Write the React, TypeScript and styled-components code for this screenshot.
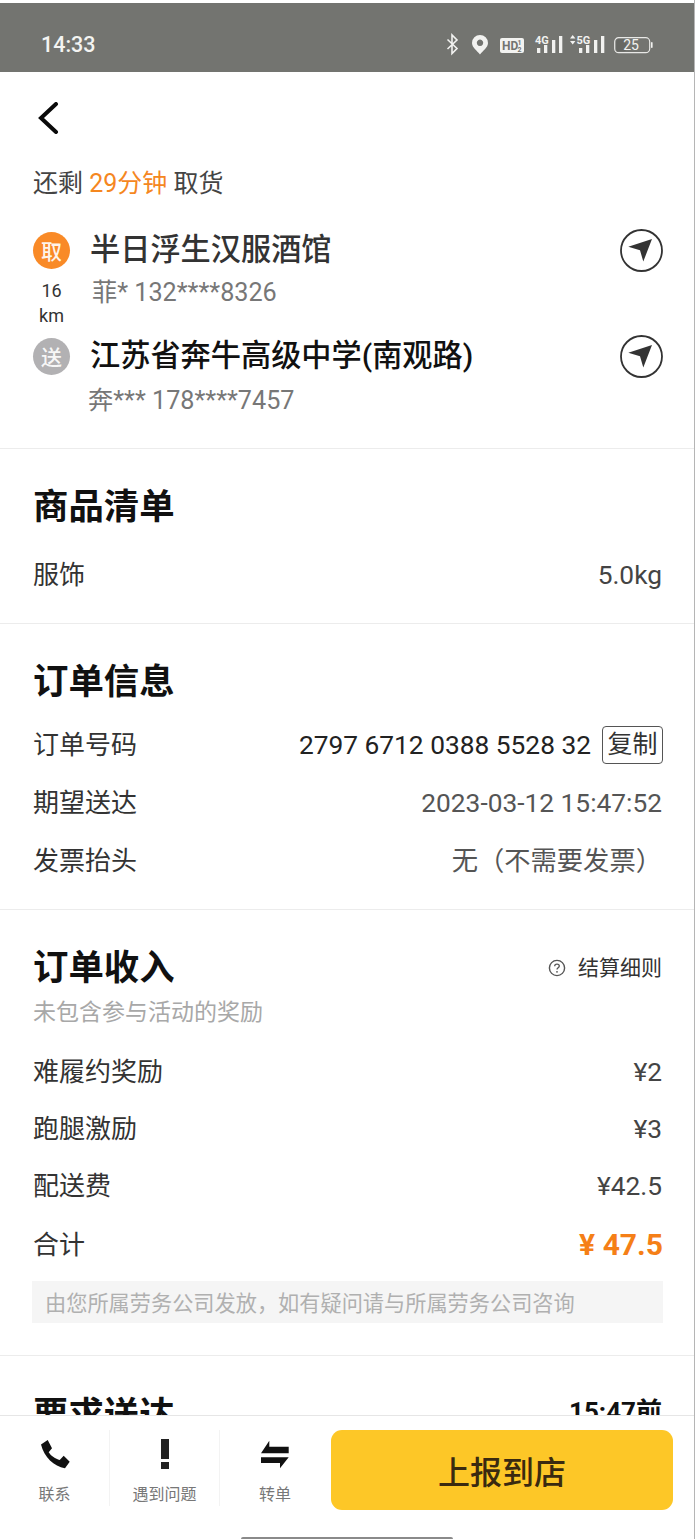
import React from "react";
import styled, { createGlobalStyle } from "styled-components";

const Global = createGlobalStyle`
  html, body { margin: 0; padding: 0; background: #fff; }
  * { box-sizing: border-box; }
  body { font-family: Roboto, "Noto Sans CJK SC", sans-serif; }
`;

const Frame = styled.div`
  width: 695px;
  height: 1539px;
  padding-top: 3px;
  display: flex;
  flex-direction: column;
  overflow: hidden;
  background: #fff;
  border-right: 1px solid #b5b5b5;
  color: #222;
`;

const StatusBar = styled.div`
  height: 69px;
  flex: none;
  background: #737470;
  color: #f4f4f2;
  display: flex;
  align-items: center;
  justify-content: space-between;
  padding: 14px 41px 0 41px;
`;
const Clock = styled.span`
  font-size: 21.5px;
  font-weight: 500;
`;
const StatusIcons = styled.div`
  display: flex;
  align-items: center;
  height: 26px;
`;

const Scroll = styled.div`
  flex: 1;
  min-height: 0;
  overflow: hidden;
`;

const Head = styled.div`
  padding: 30px 32px 0 33px;
  border-bottom: 1px solid #ececec;
  height: 377px;
`;
const Back = styled.div`
  height: 34px;
  padding-left: 4px;
  display: flex;
`;
const Remain = styled.div`
  margin-top: 33px;
  font-size: 25px;
  line-height: 30px;
  color: #444;
`;
const Accent = styled.span`
  color: #f5871f;
`;
const Route = styled.div`
  margin-top: 29px;
  display: grid;
  grid-template-columns: 57px 1fr 43px;
  grid-template-rows: 44px 62px 44px 46px;
  align-items: center;
  margin-right: -1px;
`;
const Marker = styled.span<{ $bg: string }>`
  width: 37px;
  height: 37px;
  border-radius: 50%;
  background: ${(p) => p.$bg};
  color: rgba(255, 255, 255, 0.92);
  font-size: 21px;
  font-weight: 500;
  display: flex;
  align-items: center;
  justify-content: center;
`;
const Place = styled.div<{ $c: string }>`
  font-size: 30.2px;
  font-weight: 500;
  color: ${(p) => p.$c};
  line-height: 40px;
  white-space: nowrap;
`;
const Dist = styled.div`
  width: 37px;
  text-align: center;
  font-size: 18px;
  line-height: 25px;
  color: #333;
  align-self: center;
`;
const Contact = styled.div<{ $shift: number; $up: number }>`
  font-size: 25.2px;
  line-height: 32px;
  color: #777;
  margin-left: ${(p) => p.$shift}px;
  margin-bottom: ${(p) => p.$up}px;
`;
const Span = styled.div`
  grid-column: 2 / 4;
`;

const Section = styled.section<{ $h: number }>`
  height: ${(p) => p.$h}px;
  flex: none;
  border-bottom: 1px solid #ececec;
  padding: 0 32px 0 33px;
`;
const TitleRow = styled.div<{ $top: number }>`
  padding-top: ${(p) => p.$top}px;
  display: flex;
  justify-content: space-between;
  align-items: center;
`;
const Title = styled.h2`
  margin: 0;
  font-size: 35.4px;
  font-weight: 700;
  line-height: 44px;
  color: #111;
`;
const Row = styled.div<{ $h: number; $gap?: number }>`
  height: ${(p) => p.$h}px;
  margin-top: ${(p) => p.$gap || 0}px;
  display: flex;
  align-items: center;
  justify-content: space-between;
  font-size: 26px;
  line-height: 34px;
  color: #333;
`;
const Value = styled.span<{ $c?: string }>`
  font-size: 26.3px;
  color: ${(p) => p.$c || "#444"};
  display: flex;
  align-items: center;
  white-space: nowrap;
`;
const Copy = styled.span`
  width: 61px;
  height: 38px;
  margin: 0 -1px 0 11px;
  border: 1px solid #555;
  border-radius: 4px;
  font-size: 25px;
  display: flex;
  align-items: center;
  justify-content: center;
  color: #333;
`;
const Rules = styled.span`
  display: flex;
  align-items: center;
  gap: 12px;
  font-size: 21px;
  line-height: 28px;
  color: #333;
`;
const Hint = styled.div`
  margin-top: 8px;
  font-size: 23px;
  line-height: 30px;
  color: #a8a8a8;
`;
const Total = styled.span`
  font-size: 30px;
  font-weight: 700;
  color: #f57f17;
  margin-right: -1px;
`;
const Note = styled.div`
  height: 42px;
  margin: 6px -1px 0 -1px;
  padding-left: 13px;
  background: #f5f5f5;
  color: #b0b0b0;
  font-size: 21.2px;
  display: flex;
  align-items: center;
`;
const Due = styled.span`
  font-size: 26px;
  font-weight: 700;
  color: #111;
  margin-bottom: 10px;
`;

const BottomBar = styled.div`
  height: 124px;
  flex: none;
  border-top: 1px solid #e6e6e6;
  display: flex;
  flex-direction: column;
`;
const BarMain = styled.div`
  flex: 1;
  display: flex;
  padding: 14px 21px 0 0;
  align-items: flex-start;
`;
const Actions = styled.div`
  display: flex;
  width: 331px;
  height: 76px;
  flex: none;
`;
const Action = styled.div<{ $w: number; $line?: boolean }>`
  width: ${(p) => p.$w}px;
  flex: none;
  display: flex;
  flex-direction: column;
  align-items: center;
  border-right: ${(p) => (p.$line ? "1px solid #f3f3f3" : "none")};
`;
const ActionIcon = styled.div`
  height: 48px;
  display: flex;
  align-items: center;
  justify-content: center;
`;
const ActionLabel = styled.span`
  margin-top: 7px;
  font-size: 16px;
  line-height: 22px;
  color: #777;
`;
const Primary = styled.button`
  width: 343px;
  height: 80px;
  border: none;
  border-radius: 11px;
  background: #fdc727;
  color: #3a2a10;
  font-family: inherit;
  font-size: 32px;
  font-weight: 500;
  padding: 0;
`;
const HomeIndicator = styled.div`
  width: 212px;
  height: 2px;
  margin: 0 0 0 241px;
  background: #8a8a8a;
  border-radius: 2px 2px 0 0;
`;

const Chevron = () => (
  <svg width="22" height="32" viewBox="0 0 22 32" fill="none">
    <path d="M19 2 L4 16 L19 30" stroke="#0a0a0a" strokeWidth="4" strokeLinecap="round" strokeLinejoin="miter" />
  </svg>
);

const NavIcon = () => (
  <svg width="43" height="43" viewBox="0 0 43 43">
    <circle cx="21.5" cy="21.5" r="20.5" fill="none" stroke="#333" strokeWidth="1.8" />
    <path d="M32 10 L8.3 17.7 L20 21.3 L23.3 32.5 Z" fill="#333" />
  </svg>
);

const Help = () => (
  <svg width="18" height="18" viewBox="0 0 18 18" fill="none">
    <circle cx="9" cy="9" r="7.6" stroke="#555" strokeWidth="1.4" />
    <path d="M6.7 7.2c0-1.3 1-2.1 2.3-2.1s2.3.8 2.3 2c0 1.8-2.3 1.7-2.3 3.5" stroke="#555" strokeWidth="1.3" />
    <circle cx="9" cy="12.8" r="0.9" fill="#555" />
  </svg>
);

const Phone = () => (
  <svg width="30" height="30" viewBox="0 0 30 30">
    <path
      d="M1 5.5 L7.7 1 L12 9.3 L8.7 13.3 C11 17 15.5 20 19.7 21 L23.7 16.7 L29.7 22.7 L25 29.3 C14 27.5 4 18 1 5.5 Z"
      fill="#111"
    />
  </svg>
);

const Bang = () => (
  <svg width="10" height="30" viewBox="0 0 10 30">
    <path d="M1 0 H9 V20 H1 Z" fill="#222" />
    <rect x="1" y="23" width="8" height="7" fill="#222" />
  </svg>
);

const Swap = () => (
  <svg width="30" height="30" viewBox="0 0 30 30">
    <path d="M1 14.3 L9.3 1.7 V7.7 H28.7 V14.3 Z" fill="#111" />
    <path d="M1 18.3 H28.7 L20 29.3 V24 H1 Z" fill="#111" />
  </svg>
);

const Icons = () => (
  <svg width="210" height="26" viewBox="0 0 210 26" fill="#f2f2f0" fontFamily="Roboto, sans-serif">
    <path d="M4.5 7.5 L14 16.5 L9 21.5 V3 L14 8 L4.5 17" fill="none" stroke="#f2f2f0" strokeWidth="1.6" />
    <path d="M37 3 a8 8 0 0 1 8 8 c0 4.5-5 7.5-8 11.5 c-3-4-8-7-8-11.5 a8 8 0 0 1 8-8 Z M37 7.6 a3.2 3.2 0 1 0 .01 0 Z" fillRule="evenodd" />
    <rect x="57" y="6" width="24" height="15" rx="2" />
    <text x="59" y="18" fontSize="12" fontWeight="700" fill="#737470">HD</text>
    <text x="74.5" y="13" fontSize="7" fontWeight="700" fill="#737470">1</text>
    <text x="74.5" y="20" fontSize="7" fontWeight="700" fill="#737470">2</text>
    <text x="92" y="11.5" fontSize="11" fontWeight="700">4G</text>
    <rect x="94" y="16" width="3.3" height="5" />
    <rect x="101" y="13" width="3.3" height="8" />
    <rect x="109" y="8" width="3.3" height="13" />
    <rect x="116" y="4" width="3.3" height="17" />
    <path d="M127 6.5 l2.7-3.5 2.7 3.5 Z M127 9 l2.7 3.5 2.7-3.5 Z" />
    <text x="133.5" y="11.5" fontSize="11" fontWeight="700">5G</text>
    <rect x="136" y="16" width="3.3" height="5" />
    <rect x="143" y="13" width="3.3" height="8" />
    <rect x="151" y="8" width="3.3" height="13" />
    <rect x="158" y="4" width="3.3" height="17" />
    <rect x="171.7" y="5.7" width="35" height="15" rx="4" fill="none" stroke="#e8e8e6" strokeWidth="1.2" />
    <rect x="173.2" y="7.2" width="10" height="12" rx="2.5" fill="#666763" />
    <rect x="208" y="10" width="1.6" height="6" rx="0.8" />
    <text x="188" y="18.3" textAnchor="middle" fontSize="14">25</text>
  </svg>
);

export default function App() {
  return (
    <Frame>
      <Global />
      <StatusBar>
        <Clock>14:33</Clock>
        <StatusIcons>
          <Icons />
        </StatusIcons>
      </StatusBar>
      <Scroll>
        <Head>
          <Back>
            <Chevron />
          </Back>
          <Remain>
            还剩 <Accent>29分钟</Accent> 取货
          </Remain>
          <Route>
            <Marker $bg="#f98a27">取</Marker>
            <Place $c="#333">半日浮生汉服酒馆</Place>
            <NavIcon />
            <Dist>
              16
              <br />
              km
            </Dist>
            <Span>
              <Contact $shift={2} $up={20}>菲* 132****8326</Contact>
            </Span>
            <Marker $bg="#b2b1b3">送</Marker>
            <Place $c="#111">江苏省奔牛高级中学(南观路)</Place>
            <NavIcon />
            <span />
            <Span>
              <Contact $shift={-2} $up={0}>奔*** 178****7457</Contact>
            </Span>
          </Route>
        </Head>
        <Section $h={175}>
          <TitleRow $top={36}>
            <Title>商品清单</Title>
          </TitleRow>
          <Row $h={60} $gap={16}>
            <span>服饰</span>
            <Value>5.0kg</Value>
          </Row>
        </Section>
        <Section $h={286}>
          <TitleRow $top={36}>
            <Title>订单信息</Title>
          </TitleRow>
          <Row $h={58} $gap={12}>
            <span>订单号码</span>
            <Value $c="#222">
              2797 6712 0388 5528 32<Copy>复制</Copy>
            </Value>
          </Row>
          <Row $h={58}>
            <span>期望送达</span>
            <Value $c="#555">2023-03-12 15:47:52</Value>
          </Row>
          <Row $h={57}>
            <span>发票抬头</span>
            <Value $c="#555">无（不需要发票）</Value>
          </Row>
        </Section>
        <Section $h={446}>
          <TitleRow $top={36}>
            <Title>订单收入</Title>
            <Rules>
              <Help />
              结算细则
            </Rules>
          </TitleRow>
          <Hint>未包含参与活动的奖励</Hint>
          <Row $h={57} $gap={15.5}>
            <span>难履约奖励</span>
            <Value>¥2</Value>
          </Row>
          <Row $h={57}>
            <span>跑腿激励</span>
            <Value>¥3</Value>
          </Row>
          <Row $h={57}>
            <span>配送费</span>
            <Value>¥42.5</Value>
          </Row>
          <Row $h={60}>
            <span>合计</span>
            <Total>¥ 47.5</Total>
          </Row>
          <Note>由您所属劳务公司发放，如有疑问请与所属劳务公司咨询</Note>
        </Section>
        <Section $h={100}>
          <TitleRow $top={35}>
            <Title>要求送达</Title>
            <Due>15:47前</Due>
          </TitleRow>
        </Section>
      </Scroll>
      <BottomBar>
        <BarMain>
          <Actions>
            <Action $w={110} $line>
              <ActionIcon>
                <Phone />
              </ActionIcon>
              <ActionLabel>联系</ActionLabel>
            </Action>
            <Action $w={110} $line>
              <ActionIcon>
                <Bang />
              </ActionIcon>
              <ActionLabel>遇到问题</ActionLabel>
            </Action>
            <Action $w={110}>
              <ActionIcon>
                <Swap />
              </ActionIcon>
              <ActionLabel>转单</ActionLabel>
            </Action>
          </Actions>
          <Primary>上报到店</Primary>
        </BarMain>
        <HomeIndicator />
      </BottomBar>
    </Frame>
  );
}
